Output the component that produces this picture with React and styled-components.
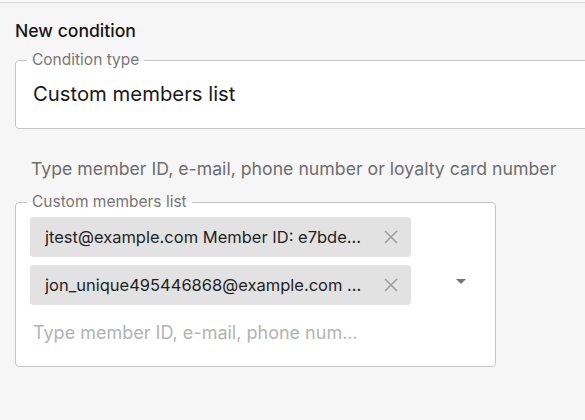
import React from "react";
import styled, { createGlobalStyle } from "styled-components";

const GlobalStyle = createGlobalStyle`
  * { box-sizing: border-box; }
  body {
    margin: 0;
    background: #fafafa;
    font-family: Inter, "Noto Sans", sans-serif;
    color: #1f1f1f;
  }
`;

const Page = styled.div`
  margin-top: 2px;
  border-top: 1px solid #d6d6d6;
  background: #f6f6f6;
  height: 418px;
  padding: 18px 0 0 15px;
  overflow: hidden;
`;

const Heading = styled.h3`
  margin: 0;
  font-size: 17.6px;
  line-height: 20px;
  font-weight: 500;
  color: #161616;
`;

const Field = styled.fieldset`
  margin: ${(p) => p.$mt || 0}px 0 0;
  min-width: 0;
  width: ${(p) => p.$width}px;
  border: 1px solid #c6c6c6;
  border-radius: 4px;
  background: #fff;
  padding: ${(p) => p.$pad};
`;

const Legend = styled.legend`
  margin-left: ${(p) => p.$offset}px;
  padding: 0 5px;
  font-size: 15.5px;
  line-height: 18px;
  color: #777;
`;

const Value = styled.div`
  margin-top: 13px;
  font-size: 20.3px;
  line-height: 24px;
  color: #1a1a1a;
`;

const Helper = styled.p`
  margin: 28px 0 0 16px;
  font-size: 17.7px;
  line-height: 24px;
  color: #6e6e6e;
`;

const ListRow = styled.div`
  display: flex;
  align-items: center;
`;

const Column = styled.div`
  display: flex;
  flex-direction: column;
  gap: 8px;
  width: 381px;
`;

const Chip = styled.div`
  display: flex;
  align-items: center;
  height: 40px;
  padding: 0 13px 0 15px;
  border-radius: 4px;
  background: #e2e2e2;
  font-size: 16.5px;
  color: #1f1f1f;
`;

const ChipText = styled.span`
  flex: 1;
  min-width: 0;
  overflow: hidden;
  white-space: nowrap;
  text-overflow: ellipsis;
  padding-right: 12px;
`;

const Placeholder = styled.div`
  margin: 8px 0 0 3px;
  font-size: 18px;
  line-height: 24px;
  color: #b3b3b3;
`;

const Arrow = styled.div`
  margin-left: 45px;
  width: 0;
  height: 0;
  border-left: 5px solid transparent;
  border-right: 5px solid transparent;
  border-top: 5px solid #757575;
`;

const Close = () => (
  <svg width="14" height="14" viewBox="0 0 14 14">
    <path d="M1 1L13 13M13 1L1 13" stroke="#9e9e9e" strokeWidth="1.6" />
  </svg>
);

const members = [
  "jtest@example.com Member ID: e7bde...",
  "jon_unique495446868@example.com ...",
];

export default function App() {
  return (
    <>
      <GlobalStyle />
      <Page>
        <Heading>New condition</Heading>
        <Field $mt={10} $width={640} $pad="0 17px 22px 17px">
          <Legend $offset={-6}>Condition type</Legend>
          <Value>Custom members list</Value>
        </Field>
        <Helper>
          Type member ID, e-mail, phone number or loyalty card number
        </Helper>
        <Field $mt={12} $width={481} $pad="6px 28px 21px 14px">
          <Legend $offset={-3}>Custom members list</Legend>
          <ListRow>
            <Column>
              {members.map((m) => (
                <Chip key={m}>
                  <ChipText>{m}</ChipText>
                  <Close />
                </Chip>
              ))}
              <Placeholder>Type member ID, e-mail, phone num...</Placeholder>
            </Column>
            <Arrow />
          </ListRow>
        </Field>
      </Page>
    </>
  );
}
